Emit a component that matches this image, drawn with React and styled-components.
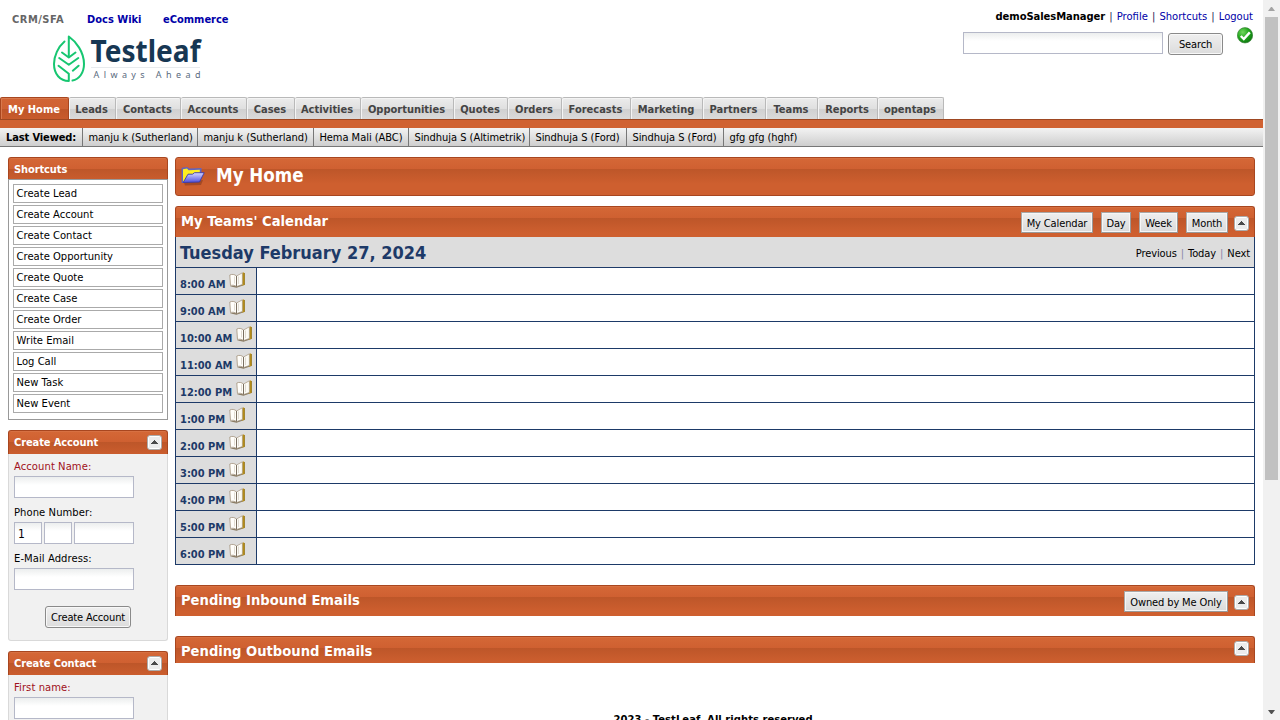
import React from "react";
import styled, { createGlobalStyle } from "styled-components";

const tahoma = `Tahoma, "DejaVu Sans Condensed", "DejaVu Sans", sans-serif`;
const verdana = `Verdana, "DejaVu Sans", sans-serif`;
const headerFill = `linear-gradient(#da7a4e 0, #d46736 1px, #cf6031 11px, #bd5629 11px, #ce5f2f 26px, #ce5f2f 100%)`;

const GlobalStyle = createGlobalStyle`
  * { box-sizing: border-box; }
  html, body { margin: 0; height: 720px; overflow: hidden; background: #fff; }
  body { font: 11px/13px ${tahoma}; color: #000; }
  a { color: inherit; text-decoration: none; }
`;

const Window = styled.div`
  display: flex;
  width: 1280px;
  height: 720px;
  overflow: hidden;
`;
const Page = styled.div`
  width: 1263px;
  flex: none;
`;

/* Scrollbar */
const Track = styled.div`
  width: 17px;
  background: #f1f1f1;
  display: flex;
  flex-direction: column;
  align-items: center;
  height: 720px;
`;
const Thumb = styled.div`
  width: 13px;
  height: 463px;
  background: #c1c1c1;
  margin-bottom: auto;
`;
const ArrowBox = styled.div`
  height: 17px;
  display: flex;
  align-items: center;
`;

/* Top area */
const Masthead = styled.header`
  height: 97px;
  display: flex;
  justify-content: space-between;
`;
const AppLinks = styled.nav`
  display: flex;
  gap: 22px;
  padding: 13px 0 0 12px;
  font: bold 11px/13px ${tahoma};
`;
const AppLink = styled.a`
  white-space: nowrap;
  width: ${(p) => p.$w}px;
  letter-spacing: ${(p) => p.$ls || 0}px;
  color: ${(p) => (p.$current ? "#666" : "#0000a8")};
`;
const Logo = styled.svg`
  display: block;
  margin: 8px 0 0 50px;
  overflow: visible;
`;
const Account = styled.div`
  display: flex;
  flex-direction: column;
  align-items: flex-end;
  padding: 10px 10px 0 0;
`;
const UserLinks = styled.div`
  font: 10px/13px ${verdana};
  color: #0000a8;
  white-space: nowrap;
  word-spacing: 0.9px;
  b { color: #000; letter-spacing: -0.07px; }
  i { font-style: normal; color: #225; }
`;
const SearchRow = styled.div`
  display: flex;
  align-items: flex-start;
  margin-top: 4px;
`;
const Field = styled.input`
  display: block;
  width: ${(p) => p.$w}px;
  height: 22px;
  padding: 2px 3px 0;
  border: 1px solid #b5b8c8;
  border-radius: 0;
  background: linear-gradient(#eceeee, #fff 8px);
  font: 12px ${tahoma};
  outline: none;
  margin-top: ${(p) => p.$top || 0}px;
`;
const Button = styled.button`
  width: ${(p) => p.$w}px;
  height: 22px;
  padding: 1px 0 0;
  border: 1px solid #8a8a8a;
  border-radius: 3px;
  box-shadow: inset 0 0 0 1px #f8f8f8;
  background: linear-gradient(#efefef, #dcdcdc);
  font: 11px/18px ${tahoma};
  white-space: nowrap;
  letter-spacing: -0.13px;
`;
const SearchButton = styled(Button)`
  margin: 6px 14px 0 5px;
`;

/* Tabs */
const TabBar = styled.nav`
  display: flex;
  height: 22px;
`;
const Tab = styled.a`
  width: ${(p) => p.$w}px;
  height: 22px;
  border: 1px solid ${(p) => (p.$active ? "#a8461f" : "#b9b9b9")};
  border-width: 1px 1px 0 ${(p) => (p.$active ? 1 : 0)}px;
  border-radius: 2px 2px 0 0;
  box-shadow: inset 1px 1px 0 ${(p) => (p.$active ? "#d8794e" : "#f4f4f4")};
  background: ${(p) =>
    p.$active
      ? "linear-gradient(#d26434 0, #cf6132 11px, #bf5629 11px, #c85b2c 100%)"
      : "linear-gradient(#ececec 0, #dfdfdf 11px, #d0d0d0 11px, #dadada 100%)"};
  color: ${(p) => (p.$active ? "#fff" : "#444")};
  padding-right: 1px;
  font: bold 11px/23px ${tahoma};
  text-align: center;
  white-space: nowrap;
`;
const Strip = styled.div`
  height: 9px;
  border-top: 1px solid #9e4822;
  background: #d06232;
`;
const Recent = styled.div`
  display: flex;
  height: 19px;
  border-bottom: 1px solid #777;
  background: linear-gradient(#f3f3f3, #cecece);
`;
const RecentItem = styled.a`
  width: ${(p) => p.$w}px;
  padding-left: ${(p) => (p.$bold ? 6 : 5.4)}px;
  border-right: ${(p) => (p.$last ? "none" : "1px solid #777")};
  line-height: 19px;
  white-space: nowrap;
  font-weight: ${(p) => (p.$bold ? "bold" : "normal")};
  letter-spacing: ${(p) => (p.$bold ? -0.12 : -0.03)}px;
`;

/* Body */
const Columns = styled.div`
  display: flex;
  gap: 7px;
  padding: 10px 8px 0;
`;
const Sidebar = styled.aside`
  width: 160px;
  flex: none;
`;
const Main = styled.main`
  width: 1080px;
`;
const SideHeader = styled.div`
  display: flex;
  justify-content: space-between;
  height: ${(p) => p.$h || 24}px;
  padding: 4px 5px 0;
  border: 1px solid #a8461f;
  border-bottom: 0;
  border-radius: 3px 3px 0 0;
  background: ${headerFill};
  color: #fff;
  font: bold 11px/15px ${tahoma};
  letter-spacing: -0.1px;
`;
const ShortcutList = styled.div`
  height: 241px;
  margin-bottom: 10px;
  border: 1px solid #999;
  padding: 4px;
  display: flex;
  flex-direction: column;
  gap: 2px;
`;
const Shortcut = styled.a`
  height: 19px;
  border: 1px solid #aaa;
  padding-left: 2.6px;
  font: 10px/18px ${verdana};
`;
const FormBody = styled.form`
  height: 187px;
  margin-bottom: 10px;
  padding: 6px 5px 0;
  border: 1px solid #d9d9d9;
  border-top: 0;
  border-radius: 0 0 3px 3px;
  background: #f1f1f1;
`;
const Label = styled.label`
  display: block;
  height: 16px;
  margin-top: ${(p) => p.$top || 0}px;
  font: 10px/13px ${verdana};
  letter-spacing: 0.07px;
  color: ${(p) => (p.$required ? "#a01020" : "#000")};
`;
const FieldRow = styled.div`
  display: flex;
  gap: 2px;
`;
const FormButton = styled(Button)`
  display: block;
  margin: 16px 0 0 31px;
`;

const PageTitle = styled.div`
  display: flex;
  align-items: flex-start;
  height: 39px;
  padding: 8px 5px 0;
  margin-bottom: 10px;
  border: 1px solid #a8461f;
  border-radius: 3px;
  background: ${headerFill};
  color: #fff;
  font: bold 18.6px/20px ${tahoma};
`;
const TitleText = styled.span`
  margin-left: 11px;
`;
const SectionHeader = styled.div`
  display: flex;
  justify-content: space-between;
  height: ${(p) => p.$h}px;
  padding: 5px 5px 0;
  margin-bottom: ${(p) => p.$gap || 0}px;
  border: 1px solid #a8461f;
  border-bottom: 0;
  border-radius: 3px 3px 0 0;
  background: ${headerFill};
  color: #fff;
`;
const SectionTitle = styled.span`
  font: bold 14.6px/18px ${tahoma};
`;
const Actions = styled.div`
  display: flex;
  align-items: flex-start;
`;
const ActionButton = styled.a`
  width: ${(p) => p.$w}px;
  height: 21px;
  margin-right: ${(p) => p.$gap}px;
  border: 1px solid #999;
  border-color: #a8a8a8 #999 #999 #a8a8a8;
  box-shadow: inset 0 0 0 1px #f6f6f6;
  background: linear-gradient(#efefef, #dadada);
  color: #000;
  text-align: center;
  line-height: 21px;
  white-space: nowrap;
  letter-spacing: -0.13px;
`;
const ToggleIcon = styled.svg`
  display: block;
  flex: none;
  margin-top: ${(p) => p.$top || 0}px;
`;

const Calendar = styled.div`
  border: 1px solid #1d3a68;
  border-top: 0;
  margin-bottom: 20px;
`;
const DateRow = styled.div`
  display: flex;
  justify-content: space-between;
  height: 30px;
  padding: 0 4px;
  background: #ddd;
`;
const DateText = styled.div`
  color: #1d3a68;
  font: bold 18px/31px ${tahoma};
`;
const DateNav = styled.div`
  line-height: 33px;
  letter-spacing: -0.1px;
  word-spacing: 1px;
  i { font-style: normal; color: #88a; }
`;
const Slot = styled.div`
  display: flex;
  height: 27px;
  border-top: 1px solid #1d3a68;
`;
const SlotTime = styled.div`
  display: flex;
  gap: 3px;
  width: 81px;
  padding: 4px 0 0 4px;
  border-right: 1px solid #1d3a68;
  background: #ddd;
  color: #1d3a68;
  font: bold 11px/25px ${tahoma};
  white-space: nowrap;
`;
const TimeText = styled.span`
  width: ${(p) => p.$w}px;
`;
const Footer = styled.footer`
  margin-top: 50px;
  text-align: center;
  font: bold 10px/13px ${verdana};
  letter-spacing: 0.04px;
`;

const Toggle = ({ top }) => (
  <ToggleIcon $top={top} width="15" height="15" viewBox="0 0 15 15">
    <rect x="0.5" y="0.5" width="14" height="14" rx="2.5" fill="#fff" stroke="#ababab" />
    <rect x="2" y="2" width="11" height="11" fill="#ececec" />
    <path d="M7 5h1v1h1v1h1v1h1v1H4V8h1V7h1V6h1z" fill="#4a4a4a" />
  </ToggleIcon>
);

const Book = () => (
  <svg width="17" height="17" viewBox="0 0 17 17">
    <path d="M.8 14.200 7.500 15.800 15.500 13v-1.500L8 13.500z" fill="#8a7c64" />
    <path d="M13 1.200 14.800.3l.8 1.200v11.200L13 13.800z" fill="#c59a1c" />
    <path d="M15.200 1v11.800" stroke="#8a6a10" strokeWidth=".9" />
    <path d="M.8 3C3 2 5.500 2.200 7.500 4v10.600C5.500 13 3 13 1.500 13.600z" fill="#fffefa" stroke="#a3937c" strokeWidth=".8" />
    <path d="M7.500 4 13.400.8v11.700L7.500 14.600z" fill="#fbfaf5" stroke="#a3937c" strokeWidth=".7" />
    <path d="M7.500 4v10.600" stroke="#74695a" strokeWidth=".9" />
    <path d="M9.500 4.500v7.500M5.500 4.500v7" stroke="#d9d3c8" strokeWidth=".8" />
  </svg>
);

const Folder = () => (
  <svg width="24" height="22" viewBox="0 0 24 22">
    <defs>
      <linearGradient id="flap" x1="0" y1="0" x2="0" y2="1">
        <stop offset="0" stopColor="#d6d8ff" />
        <stop offset="1" stopColor="#4f50de" />
      </linearGradient>
    </defs>
    <path d="M3 16.500 22 14l-2 5-16 .5z" fill="#7c3317" opacity=".5" />
    <path d="M.6 1.800 6.500 1l1.600 1.500L20.500 2v5L4 17 .6 17z" fill="#6264bd" />
    <path d="M2 3.200 6 2.500l1.600 1.700 11.200-.4V8L3 15.500H2z" fill="#fff01e" />
    <path d="M2.200 16.500 7 8.200h4.500l2-1.500h9.700L18.500 16z" fill="url(#flap)" stroke="#3a3aa8" strokeWidth=".9" />
  </svg>
);

const Check = () => (
  <svg width="16" height="17" viewBox="0 0 16 17">
    <defs>
      <radialGradient id="ok" cx=".35" cy=".3" r=".8">
        <stop offset="0" stopColor="#72d75e" />
        <stop offset=".5" stopColor="#22a51c" />
        <stop offset="1" stopColor="#0a720d" />
      </radialGradient>
    </defs>
    <circle cx="8" cy="8.3" r="7.7" fill="url(#ok)" stroke="#397d39" strokeWidth=".6" />
    <path d="m3.8 9 3 3 6-6.600" fill="none" stroke="#fff" strokeWidth="2.4" />
  </svg>
);

const TestleafLogo = () => (
  <Logo width="156" height="50" viewBox="50 34 156 50">
    <g fill="none" stroke="#17c671" strokeWidth="2" strokeLinecap="round" strokeLinejoin="round">
      <path d="M68.800 57V36.500C76 41.500 84 52 84 64c0 9-5 15.500-11.500 16.500" />
      <path d="M64.500 41.500C58 47 54 56 54 64c0 10 6 17 14.800 17v-7.200l-10.300-8" />
      <path d="m62 52.500 6.800 5 6.700-5M59.200 58l9.600 6.800 9.500-6.800M72.800 70.700l5.800-5" />
    </g>
    <text x="90.500" y="62" textLength="110" lengthAdjust="spacingAndGlyphs" fontFamily="Noto Sans, Open Sans, sans-serif" fontWeight="700" fontSize="30.500" fill="#173753">Testleaf</text>
    <path d="M91 67.500H200" stroke="#e8ebee" />
    <text x="93.500" y="78" textLength="107" fontFamily="Noto Sans, sans-serif" fontSize="9" fill="#5a6b80">Always Ahead</text>
  </Logo>
);

const tabs = [
  ["My Home", 69], ["Leads", 47], ["Contacts", 65], ["Accounts", 66], ["Cases", 48],
  ["Activities", 66], ["Opportunities", 93], ["Quotes", 54], ["Orders", 54], ["Forecasts", 69],
  ["Marketing", 72], ["Partners", 63], ["Teams", 52], ["Reports", 60], ["opentaps", 66],
];
const recent = [
  ["manju k (Sutherland)", 115], ["manju k (Sutherland)", 116], ["Hema Mali (ABC)", 95],
  ["Sindhuja S (Altimetrik)", 121], ["Sindhuja S (Ford)", 97], ["Sindhuja S (Ford)", 97],
  ["gfg gfg (hghf)", 120],
];
const shortcuts = [
  "Create Lead", "Create Account", "Create Contact", "Create Opportunity", "Create Quote",
  "Create Case", "Create Order", "Write Email", "Log Call", "New Task", "New Event",
];
const hours = [
  "8:00 AM", "9:00 AM", "10:00 AM", "11:00 AM", "12:00 PM", "1:00 PM",
  "2:00 PM", "3:00 PM", "4:00 PM", "5:00 PM", "6:00 PM",
];

export default function App() {
  return (
    <Window>
      <GlobalStyle />
      <Page>
        <Masthead>
          <div>
            <AppLinks>
              <AppLink $w={53} $ls={0.5} $current>CRM/SFA</AppLink>
              <AppLink $w={54}>Docs Wiki</AppLink>
              <AppLink $w={66}>eCommerce</AppLink>
            </AppLinks>
            <TestleafLogo />
          </div>
          <Account>
            <UserLinks>
              <b>demoSalesManager</b> <i>|</i> <a>Profile</a> <i>|</i> <a>Shortcuts</a> <i>|</i> <a>Logout</a>
            </UserLinks>
            <SearchRow>
              <Field $w={200} $top={5} />
              <SearchButton $w={55}>Search</SearchButton>
              <Check />
            </SearchRow>
          </Account>
        </Masthead>
        <TabBar>
          {tabs.map(([name, w], i) => (
            <Tab key={name} $w={w} $active={i === 0}>{name}</Tab>
          ))}
        </TabBar>
        <Strip />
        <Recent>
          <RecentItem $w={83} $bold>Last Viewed:</RecentItem>
          {recent.map(([name, w], i) => (
            <RecentItem key={i} $w={w} $last={i === recent.length - 1}>{name}</RecentItem>
          ))}
        </Recent>
        <Columns>
          <Sidebar>
            <SideHeader $h={22}>Shortcuts</SideHeader>
            <ShortcutList>
              {shortcuts.map((s) => <Shortcut key={s}>{s}</Shortcut>)}
            </ShortcutList>
            <SideHeader>Create Account<Toggle /></SideHeader>
            <FormBody>
              <Label $required>Account Name:</Label>
              <Field $w={120} />
              <Label $top={8}>Phone Number:</Label>
              <FieldRow>
                <Field $w={28} defaultValue="1" />
                <Field $w={28} />
                <Field $w={60} />
              </FieldRow>
              <Label $top={8}>E-Mail Address:</Label>
              <Field $w={120} />
              <FormButton $w={86} type="button">Create Account</FormButton>
            </FormBody>
            <SideHeader>Create Contact<Toggle /></SideHeader>
            <FormBody>
              <Label $required>First name:</Label>
              <Field $w={120} />
            </FormBody>
          </Sidebar>
          <Main>
            <PageTitle><Folder /><TitleText>My Home</TitleText></PageTitle>
            <SectionHeader $h={31}>
              <SectionTitle>My Teams' Calendar</SectionTitle>
              <Actions>
                <ActionButton $w={72} $gap={8}>My Calendar</ActionButton>
                <ActionButton $w={30} $gap={8}>Day</ActionButton>
                <ActionButton $w={39} $gap={8}>Week</ActionButton>
                <ActionButton $w={42} $gap={6}>Month</ActionButton>
                <Toggle top={4} />
              </Actions>
            </SectionHeader>
            <Calendar>
              <DateRow>
                <DateText>Tuesday February 27, 2024</DateText>
                <DateNav><a>Previous</a> <i>|</i> <a>Today</a> <i>|</i> <a>Next</a></DateNav>
              </DateRow>
              {hours.map((h) => (
                <Slot key={h}>
                  <SlotTime><TimeText $w={h.length > 7 ? 53 : 46}>{h}</TimeText><Book /></SlotTime>
                </Slot>
              ))}
            </Calendar>
            <SectionHeader $h={31} $gap={20}>
              <SectionTitle>Pending Inbound Emails</SectionTitle>
              <Actions>
                <ActionButton $w={104} $gap={6}>Owned by Me Only</ActionButton>
                <Toggle top={4} />
              </Actions>
            </SectionHeader>
            <SectionHeader $h={27}>
              <SectionTitle>Pending Outbound Emails</SectionTitle>
              <Actions><Toggle top={-1} /></Actions>
            </SectionHeader>
            <Footer>2023 - TestLeaf. All rights reserved.</Footer>
          </Main>
        </Columns>
      </Page>
      <Track>
        <ArrowBox><svg width="7" height="4"><path d="M3 0h1l3 4H0z" fill="#a3a3a3" /></svg></ArrowBox>
        <Thumb />
        <ArrowBox><svg width="7" height="4"><path d="M0 0h7L4 4H3z" fill="#505050" /></svg></ArrowBox>
      </Track>
    </Window>
  );
}
